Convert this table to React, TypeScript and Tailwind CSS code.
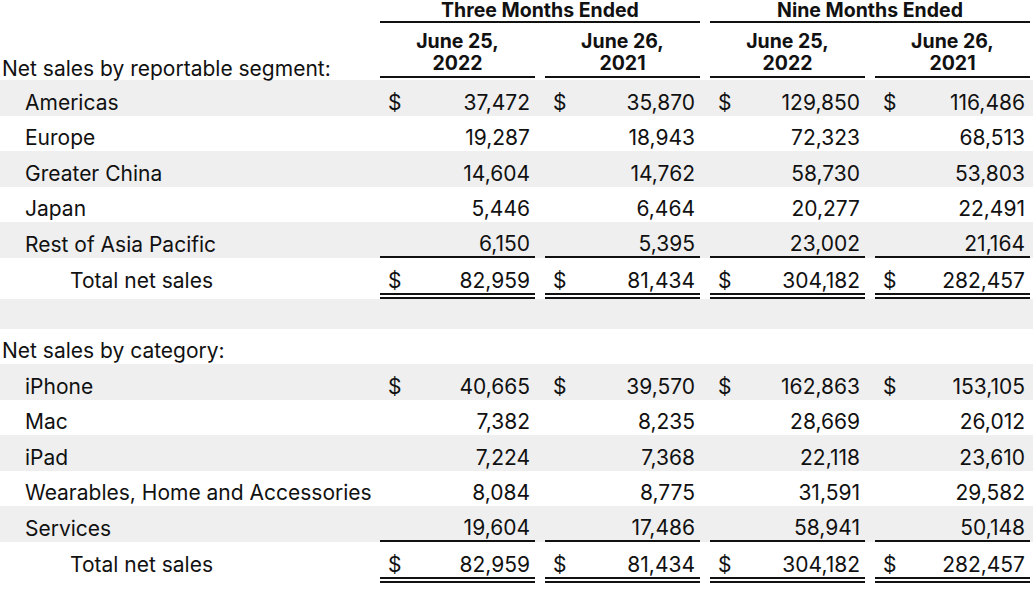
import React from "react";

type Row = {
  label: string;
  values?: string[];
  dollar?: boolean;
  shaded?: boolean;
  kind?: "item" | "subtotal" | "total" | "blank" | "heading";
};

const rows: Row[] = [
  { label: "Americas", values: ["37,472", "35,870", "129,850", "116,486"], dollar: true, shaded: true },
  { label: "Europe", values: ["19,287", "18,943", "72,323", "68,513"] },
  { label: "Greater China", values: ["14,604", "14,762", "58,730", "53,803"], shaded: true },
  { label: "Japan", values: ["5,446", "6,464", "20,277", "22,491"] },
  { label: "Rest of Asia Pacific", values: ["6,150", "5,395", "23,002", "21,164"], shaded: true, kind: "subtotal" },
  { label: "Total net sales", values: ["82,959", "81,434", "304,182", "282,457"], dollar: true, kind: "total" },
  { label: "", shaded: true, kind: "blank" },
  { label: "Net sales by category:", kind: "heading" },
  { label: "iPhone", values: ["40,665", "39,570", "162,863", "153,105"], dollar: true, shaded: true },
  { label: "Mac", values: ["7,382", "8,235", "28,669", "26,012"] },
  { label: "iPad", values: ["7,224", "7,368", "22,118", "23,610"], shaded: true },
  { label: "Wearables, Home and Accessories", values: ["8,084", "8,775", "31,591", "29,582"] },
  { label: "Services", values: ["19,604", "17,486", "58,941", "50,148"], shaded: true, kind: "subtotal" },
  { label: "Total net sales", values: ["82,959", "81,434", "304,182", "282,457"], dollar: true, kind: "total" },
];

const font = { fontFamily: "Inter, 'Liberation Sans', sans-serif" };

function DataRow({ row }: { row: Row }) {
  const kind = row.kind ?? "item";
  const height =
    kind === "total" ? "h-[41px]" : kind === "blank" ? "h-[30px]" : kind === "heading" ? "h-[35px]" : "h-[35.6px]";
  const bg = row.shaded ? "bg-[#efefef]" : "";

  if (kind === "blank") return <div className={`${height} ${bg}`} />;

  if (kind === "heading") {
    return (
      <div className={`${height} flex items-end pb-[3px] pl-[2px] leading-none`}>
        {row.label}
      </div>
    );
  }

  const cellBorder =
    kind === "total"
      ? "border-b-[6px] border-double border-[#111]"
      : kind === "subtotal"
        ? "border-b-2 border-[#111]"
        : "";

  return (
    <div className={`${height} ${bg} flex`}>
      <div
        className={`w-[380px] shrink-0 flex items-end leading-none ${
          kind === "total" ? "pl-[70px] pb-[8px]" : "pl-[25px] pb-[3px]"
        }`}
      >
        {row.label}
      </div>
      {row.values?.map((v, i) => (
        <div
          key={i}
          className={`w-[155px] shrink-0 mr-[10px] flex items-end justify-between leading-none pl-[8px] pr-[5px] ${cellBorder} ${
            kind === "total" ? "pb-[2px]" : kind === "subtotal" ? "pb-[2px]" : "pb-[3px]"
          }`}
        >
          <span>{row.dollar ? "$" : ""}</span>
          <span>{v}</span>
        </div>
      ))}
    </div>
  );
}

export default function App() {
  const dates = [
    ["June 25,", "2022"],
    ["June 26,", "2021"],
    ["June 25,", "2022"],
    ["June 26,", "2021"],
  ];

  return (
    <div className="w-[1033px] h-[590px] bg-white text-[#111] text-[21px] overflow-hidden" style={font}>
      {/* period headers */}
      <div className="flex h-[23px]">
        <div className="w-[380px] shrink-0" />
        {["Three Months Ended", "Nine Months Ended"].map((t) => (
          <div
            key={t}
            className="w-[320px] shrink-0 mr-[10px] border-b-2 border-[#111] text-center font-bold text-[19.5px] leading-[21px]"
          >
            {t}
          </div>
        ))}
      </div>

      <div className="flex h-[57px]">
        <div className="w-[380px] shrink-0 flex items-end pl-[2px] pb-[1px] leading-none">
          Net sales by reportable segment:
        </div>
        {dates.map(([a, b], i) => (
          <div
            key={i}
            className="w-[155px] shrink-0 mr-[10px] h-[55px] border-b-2 border-[#111] flex flex-col items-center justify-end pb-[2px] font-bold text-[19.5px] leading-[22px]"
          >
            <span>{a}</span>
            <span>{b}</span>
          </div>
        ))}
      </div>

      {rows.map((r, i) => (
        <DataRow key={i} row={r} />
      ))}
    </div>
  );
}
